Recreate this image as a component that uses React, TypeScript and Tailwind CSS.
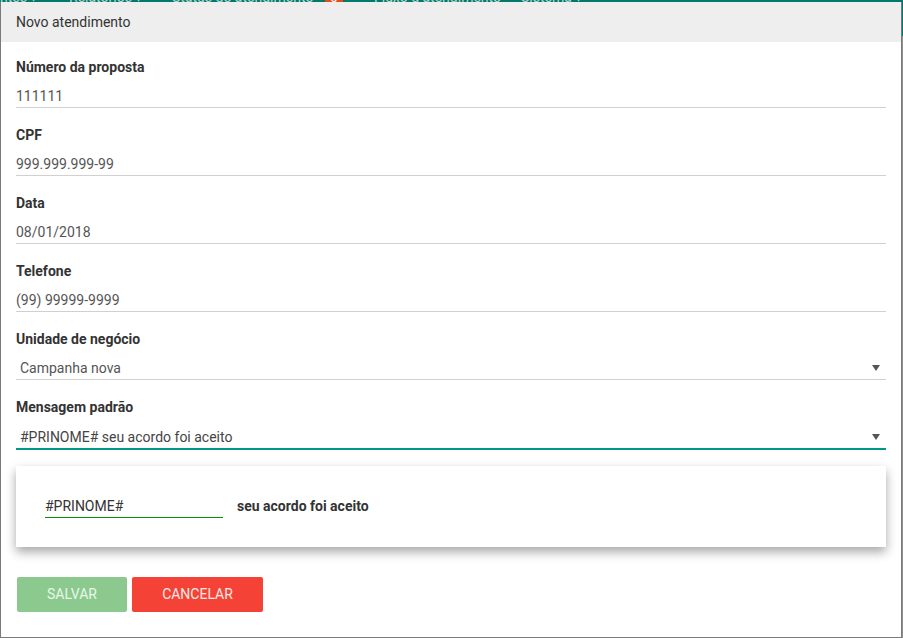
import { useState } from 'react';

const fields = [
  { label: 'Número da proposta', value: '111111' },
  { label: 'CPF', value: '999.999.999-99' },
  { label: 'Data', value: '08/01/2018' },
  { label: 'Telefone', value: '(99) 99999-9999' },
];

const Arrow = () => (
  <svg width="8" height="6" viewBox="0 0 8 6" className="shrink-0">
    <path d="M0 0 L8 0 L4 6 Z" fill="#555" />
  </svg>
);

export default function App() {
  const [prefix, setPrefix] = useState('#PRINOME#');

  return (
    <div className="relative w-[903px] h-[638px] overflow-hidden bg-[#8f8f8f] font-['Roboto','Liberation_Sans',sans-serif]">
      {/* page behind the dialog */}
      <div className="h-[36px] bg-[#00796b] flex items-start text-[14px] leading-[18px] text-[#b9d6d1]">
        <div className="flex -mt-[12px] whitespace-nowrap">
          <span className="w-[69px]">ntes ▾</span>
          <span className="w-[103px]">Relatórios ▾</span>
          <span className="w-[153px]">Status do atendimento</span>
          <span className="w-[18px] bg-[#e64a19] text-white text-center mr-[31px]">0</span>
          <span className="w-[147px]">Fluxo d atendimento</span>
          <span>Sistema ▾</span>
        </div>
      </div>

      {/* dialog */}
      <div className="absolute left-0 top-[2px] w-[902px] h-[636px] bg-white border border-[#7a7a7a] border-t-0 flex flex-col">
        <div className="h-[40px] bg-[#eeeeee] flex items-center px-[15px] text-[14px] text-[#333]">
          Novo atendimento
        </div>

        <div className="px-[15px] pt-[15px] flex flex-col">
          {fields.map((f) => (
            <div key={f.label} className="mb-[17px]">
              <div className="text-[14px] leading-[20px] font-bold text-[#333]">{f.label}</div>
              <div className="mt-[9px] text-[14px] leading-[20px] text-[#555] border-b border-[#d0d0d0] pb-[1px] h-[22px]">
                {f.value}
              </div>
            </div>
          ))}

          <div className="mb-[17px]">
            <div className="text-[14px] leading-[20px] font-bold text-[#333]">Unidade de negócio</div>
            <div className="mt-[9px] h-[22px] pb-[1px] border-b border-[#d0d0d0] flex items-center justify-between pl-[4px] pr-[6px] text-[14px] leading-[20px] text-[#555]">
              <span>Campanha nova</span>
              <Arrow />
            </div>
          </div>

          <div>
            <div className="text-[14px] leading-[20px] font-bold text-[#333]">Mensagem padrão</div>
            <div className="mt-[9px] h-[24px] border-b-2 border-[#009688] flex items-center justify-between pl-[4px] pr-[6px] text-[14px] leading-[20px] text-[#444]">
              <span>#PRINOME# seu acordo foi aceito</span>
              <Arrow />
            </div>
          </div>

          <div className="mt-[16px] h-[81px] bg-white shadow-[0_5px_10px_rgba(0,0,0,0.35)] flex items-center pl-[29px]">
            <input
              value={prefix}
              onChange={(e) => setPrefix(e.target.value)}
              className="w-[178px] h-[22px] text-[14px] text-[#333] border-b border-[#0a8a0a] outline-none bg-transparent"
            />
            <span className="ml-[14px] text-[14px] font-bold text-[#333]">seu acordo foi aceito</span>
          </div>

          <div className="mt-[30px] flex gap-[5px] pl-[1px]">
            <button className="w-[110px] h-[35px] rounded-[2px] bg-[#8bc98e] text-[#eaf6ea] text-[14px]">SALVAR</button>
            <button className="w-[131px] h-[35px] rounded-[2px] bg-[#f44336] text-[#fde9e7] text-[14px]">CANCELAR</button>
          </div>
        </div>
      </div>
    </div>
  );
}
